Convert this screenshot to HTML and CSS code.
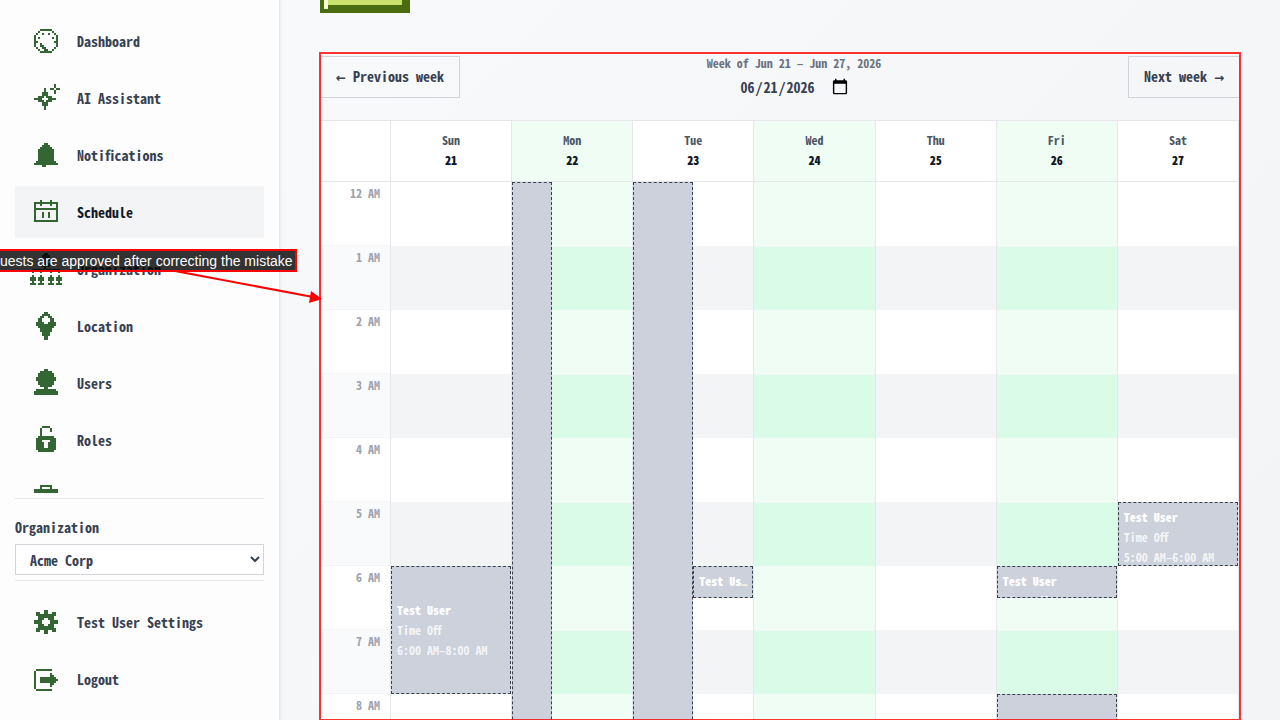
FILE: index.html
```html
<!DOCTYPE html>
<html lang="en">
<head>
    <meta charset="UTF-8">
    <title>Schedule</title>
    <link rel="stylesheet" href="styles.css">
</head>
<body>
    <aside class="sidebar">
        <nav class="nav-list">
            <a href="#" class="nav-item"><svg class="nav-icon" viewBox="-2 -2 16 16"><path d="M3 0h6v1h-6zM2 1h1v1h-1zM9 1h1v1h-1zM1 2h1v1h-1zM10 2h1v1h-1zM4 2h1v1h-1zM7 2h1v1h-1zM0 3h1v6h-1zM11 3h1v6h-1zM2 4h1v1h-1zM9 4h1v1h-1zM1 6h1v1h-1zM10 6h1v1h-1zM3 7h1v1h-1zM3 8h2v1h-2zM4 9h2v1h-2zM5 10h2v1h-2zM1 9h1v1h-1zM10 9h1v1h-1zM2 10h1v1h-1zM9 10h1v1h-1zM3 11h6v1h-6z"/></svg>Dashboard</a>
            <a href="#" class="nav-item"><svg class="nav-icon" viewBox="-2 -1 16 16"><path d="M5 2h1v2h-1zM4 4h3v2h-3zM2 6h3v1h-3zM6 6h3v1h-3zM0 7h4v1h-4zM7 7h4v1h-4zM2 8h3v1h-3zM6 8h3v1h-3zM4 9h3v2h-3zM5 11h1v2h-1zM10 0h1v2h-1zM8 2h2v1h-2zM11 2h2v1h-2zM10 3h1v2h-1z"/></svg>AI Assistant</a>
            <a href="#" class="nav-item"><svg class="nav-icon" viewBox="-2 -2 16 16"><path d="M5 0h2v1h-2zM4 1h4v1h-4zM3 2h6v1h-6zM2 3h8v6h-8zM1 9h10v1h-10zM0 10h12v1h-12zM4 11h2v1h-2z"/></svg>Notifications</a>
            <a href="#" class="nav-item active"><svg class="nav-icon" viewBox="-2 -2 16 16"><path d="M3 0h1v3h-1zM8 0h1v3h-1zM0 1h12v1h-12zM0 2h1v8h-1zM11 2h1v8h-1zM1 4h10v1h-10zM4 6h1v3h-1zM7 6h1v3h-1zM0 10h12v1h-12z"/></svg>Schedule</a>
            <a href="#" class="nav-item"><svg class="nav-icon" viewBox="0 0 16 16"><path d="M7 0h2v1h-2zM6 1h4v3h-4zM7 4h2v1h-2zM6 5h4v2h-4zM7 7h1v2h-1zM1 8h14v1h-14zM1 9h1v1h-1zM5 9h1v1h-1zM10 9h1v1h-1zM14 9h1v1h-1zM1 11h1v5h-1zM5 11h1v5h-1zM10 11h1v5h-1zM14 11h1v5h-1zM0 12h3v2h-3zM4 12h3v2h-3zM9 12h3v2h-3zM13 12h3v2h-3zM0 15h3v1h-3zM4 15h3v1h-3zM9 15h3v1h-3zM13 15h3v1h-3z"/></svg>Organization</a>
            <a href="#" class="nav-item"><svg class="nav-icon" viewBox="-3 -1 16 16"><path fill-rule="evenodd" d="M4 0h2v1h1v1h1v1h1v2h1v2h-1v1h-1v2h-1v2h-1v2h-2v-2h-1v-2h-1v-2h-1v-1h-1v-2h1v-2h1v-1h1v-1h1zM4 2v1h-1v2h1v1h2v-1h1v-2h-1v-1z"/></svg>Location</a>
            <a href="#" class="nav-item"><svg class="nav-icon" viewBox="-2 -1 16 16"><path d="M5 0h2v1h-2zM3 1h6v1h-6zM2 2h8v2h-8zM1 4h10v2h-10zM2 6h8v2h-8zM3 8h6v1h-6zM5 9h2v1h-2zM1 10h10v1h-10zM0 11h12v2h-12z"/></svg>Users</a>
            <a href="#" class="nav-item"><svg class="nav-icon" viewBox="-3 -1 16 16"><path fill-rule="evenodd" d="M3 0h4v1h-4zM2 1h1v4h-1zM7 1h1v2h-1zM1 5h8v1h1v6h-1v1h-8v-1h-1v-6h1zM3 7v1h1v3h2v-3h1v-1z"/></svg>Roles</a>
            <a href="#" class="nav-item" aria-label="Jobs"><svg class="nav-icon" viewBox="-2 -2 16 16"><path d="M3 0h6v1h-6zM3 1h1v1h-1zM8 1h1v1h-1zM0 2h12v9h-12z"/></svg></a>
        </nav>
        <div class="org-picker">
            <label for="org">Organization</label>
            <select id="org">
                <option>Acme Corp</option>
            </select>
        </div>
        <div class="account">
            <a href="#" class="nav-item"><svg class="nav-icon" viewBox="-2 -2 16 16"><path fill-rule="evenodd" d="M5 0h2v2h2v-1h2v2h-1v2h2v2h-2v2h1v2h-2v-1h-2v2h-2v-2h-2v1h-2v-2h1v-2h-2v-2h2v-2h-1v-2h2v1h2zM5 4v1h-1v2h1v1h2v-1h1v-2h-1v-1z"/></svg>Test User Settings</a>
            <a href="#" class="nav-item"><svg class="nav-icon" viewBox="-2 -3 16 16"><path d="M1 0h8v1h-8zM0 1h1v9h-1zM1 10h8v1h-8zM3 4h5v3h-5zM8 2h1v7h-1zM9 3h1v5h-1zM10 4h1v3h-1zM11 5h1v1h-1z"/></svg>Logout</a>
        </div>
    </aside>

    <main class="content">
        <div class="pixel-tab"></div>
        <section class="calendar">
            <div class="toolbar">
                <button type="button" class="week-btn"><span class="arrow">←</span> Previous week</button>
                <div class="week-info">
                    <label for="week-date">Week of Jun 21 – Jun 27, 2026</label>
                    <input type="date" id="week-date" value="2026-06-21">
                </div>
                <button type="button" class="week-btn">Next week <span class="arrow">→</span></button>
            </div>

            <div class="week-grid">
                <div class="day-head"></div>
                <div class="day-head">Sun<strong>21</strong></div>
                <div class="day-head open">Mon<strong>22</strong></div>
                <div class="day-head">Tue<strong>23</strong></div>
                <div class="day-head open">Wed<strong>24</strong></div>
                <div class="day-head">Thu<strong>25</strong></div>
                <div class="day-head open">Fri<strong>26</strong></div>
                <div class="day-head">Sat<strong>27</strong></div>

                <div class="hours">
                    <div class="hour">12 AM</div>
                    <div class="hour">1 AM</div>
                    <div class="hour">2 AM</div>
                    <div class="hour">3 AM</div>
                    <div class="hour">4 AM</div>
                    <div class="hour">5 AM</div>
                    <div class="hour">6 AM</div>
                    <div class="hour">7 AM</div>
                    <div class="hour">8 AM</div>
                </div>
                <!-- --start and --length are in hours -->
                <div class="day">
                    <div class="event" style="--start: 6; --length: 2">
                        <strong>Test User</strong>
                        <span>Time Off</span>
                        <span>6:00 AM–8:00 AM</span>
                    </div>
                </div>
                <div class="day open">
                    <div class="event third" style="--start: 0; --length: 24"></div>
                </div>
                <div class="day">
                    <div class="event half" style="--start: 0; --length: 24"></div>
                    <div class="event half second" style="--start: 6; --length: 0.5">
                        <strong>Test Us<span class="dots">…</span></strong>
                        <span>Time Off</span>
                    </div>
                </div>
                <div class="day open"></div>
                <div class="day"></div>
                <div class="day open">
                    <div class="event" style="--start: 6; --length: 0.5">
                        <strong>Test User</strong>
                        <span>Time Off</span>
                    </div>
                    <div class="event" style="--start: 8; --length: 8"></div>
                </div>
                <div class="day">
                    <div class="event" style="--start: 5; --length: 1">
                        <strong>Test User</strong>
                        <span>Time Off</span>
                        <span>5:00 AM–6:00 AM</span>
                    </div>
                </div>
            </div>
        </section>
        <div class="callout-frame"></div>
    </main>

    <svg class="callout-arrow" width="150" height="36" viewBox="0 0 150 36">
        <path d="M2 1L140 27" stroke="#f00" stroke-width="2"/>
        <path d="M138 21L149 29L136 33z" fill="#f00"/>
    </svg>
    <div class="callout">uests are approved after correcting the mistake</div>
</body>
</html>
```
FILE: styles.css
```css
* { box-sizing: border-box; margin: 0; padding: 0; }
body {
    font-family: "Noto Sans CJK JP", "Liberation Mono", monospace;
    font-feature-settings: "hwid";
    font-size: 14px;
    font-weight: 700;
    line-height: 20px;
    color: #374151;
    background: linear-gradient(135deg, #f9fafb, #f3f4f6);
    height: 100vh;
    display: flex;
    overflow: hidden;
    position: relative;
}
button, input, select {
    font: inherit;
    font-feature-settings: inherit;
    color: inherit;
}
.sidebar {
    width: 280px;
    flex-shrink: 0;
    height: 100vh;
    padding: 15px;
    background: #fdfdfd;
    border-right: 1px solid #e5e7eb;
    box-shadow: 1px 0 3px rgba(0,0,0,0.06);
    display: flex;
    flex-direction: column;
}
.nav-list {
    flex: 1;
    min-height: 0;
    overflow: hidden;
    margin-bottom: 5px;
}
.nav-item {
    display: flex;
    align-items: center;
    gap: 15px;
    height: 52px;
    padding: 0 15px;
    margin-bottom: 5px;
    color: #374151;
    text-decoration: none;
}
.nav-item.active {
    background: #f3f4f6;
    color: #111827;
}
.nav-icon {
    width: 32px;
    height: 32px;
    flex-shrink: 0;
    fill: #336633;
    shape-rendering: crispEdges;
}
.org-picker {
    border-top: 1px solid #e5e7eb;
    border-bottom: 1px solid #e5e7eb;
    padding: 18px 0 5px;
}
.org-picker label {
    display: block;
    margin-bottom: 7px;
}
.org-picker select {
    display: block;
    width: 100%;
    height: 31px;
    padding: 0 10px;
    border: 1px solid #d1d5db;
    background: white;
}
.account {
    padding-top: 15px;
}
.account .nav-item:last-child {
    margin-bottom: 0;
}
.content {
    flex: 1;
    min-width: 0;
    padding: 0 40px;
    overflow: hidden;
}
.pixel-tab {
    width: 90px;
    height: 13px;
    background: linear-gradient(#f4fbd0, #f4fbd0) 4px 0 / 4px 9px no-repeat,
        linear-gradient(#c8e06c, #c8e06c) 8px 0 / 74px 5px no-repeat,
        #4a6b10;
    margin-bottom: 43px;
}
.toolbar {
    display: flex;
    justify-content: space-between;
    align-items: flex-start;
    height: 64px;
}
.week-btn {
    height: 42px;
    padding: 0 15px;
    border: 1px solid #d1d5db;
    background: transparent;
    cursor: pointer;
}
.arrow {
    font-family: "DejaVu Sans", sans-serif;
    font-size: 12px;
}
.week-info {
    display: flex;
    flex-direction: column;
    align-items: center;
    gap: 6px;
    font-size: 12px;
    line-height: 14px;
    color: #6b7280;
}
.week-info input {
    font-size: 14px;
    line-height: 20px;
    border: none;
    background: transparent;
    color: #374151;
}
.week-info input::-webkit-calendar-picker-indicator {
    width: 18px;
    height: 18px;
    padding: 0;
    margin-left: 1px;
}
.week-grid {
    display: grid;
    grid-template-columns: 70px repeat(7, 1fr);
    border: 1px solid #e5e7eb;
    font-size: 12px;
    background: white;
}
.day-head {
    height: 61px;
    padding-top: 9px;
    text-align: center;
    color: #4b5563;
    border-right: 1px solid #e5e7eb;
    border-bottom: 1px solid #e5e7eb;
}
.day-head strong {
    display: block;
    color: #111827;
}
.day-head.open {
    background: #f0fdf4;
}
.hours {
    border-right: 1px solid #e5e7eb;
}
.hour {
    height: 64px;
    padding: 1px 10px;
    text-align: right;
    color: #9ca3af;
    border-bottom: 1px solid #f3f4f6;
}
.hour:nth-child(even) {
    background: #f9fafb;
}
.day {
    --even: white;
    --odd: #f3f4f6;
    position: relative;
    height: 1536px;
    border-right: 1px solid #e5e7eb;
    background: repeating-linear-gradient(var(--even) 0 64px, #f3f4f6 64px 65px, var(--odd) 65px 128px);
}
.day.open {
    --even: #f0fdf4;
    --odd: #dafbe8;
}
.event {
    position: absolute;
    top: calc(var(--start) * 64px);
    left: 0;
    width: 100%;
    height: calc(var(--length) * 64px);
    padding: 4px 5px;
    display: flex;
    flex-direction: column;
    justify-content: safe center;
    overflow: hidden;
    white-space: nowrap;
    background: #cdd1db;
    border: 1px dashed #374151;
    color: rgba(255,255,255,0.8);
}
.event strong {
    flex-shrink: 0;
    color: white;
}
.dots {
    font-family: "Liberation Mono", monospace;
    font-size: 10px;
}
.event.third { width: 33.33%; }
.event.half { width: 50%; }
.event.second { left: 50%; }

/* annotation layer */
.callout-frame {
    position: absolute;
    top: 52px;
    left: 319px;
    right: 39px;
    bottom: -1px;
    border: 2px solid rgba(255,0,0,0.8);
}
.callout-arrow {
    position: absolute;
    left: 173px;
    top: 270px;
}
.callout {
    position: absolute;
    left: -2px;
    top: 249px;
    padding: 1px 2px 0 0;
    border: 2px solid #f00;
    background: rgba(0,0,0,0.8);
    color: white;
    font: 14px/18px "Liberation Sans", Arial, sans-serif;
    white-space: nowrap;
}
```
